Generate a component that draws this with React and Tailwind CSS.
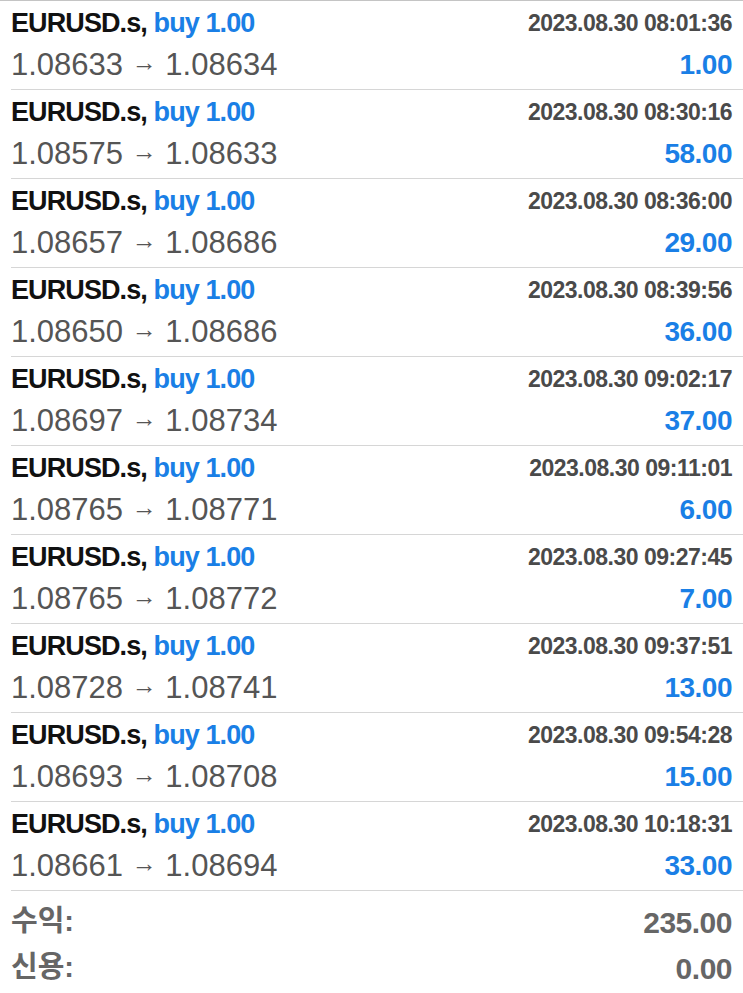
const deals = [
  { time: '2023.08.30 08:01:36', open: '1.08633', close: '1.08634', profit: '1.00' },
  { time: '2023.08.30 08:30:16', open: '1.08575', close: '1.08633', profit: '58.00' },
  { time: '2023.08.30 08:36:00', open: '1.08657', close: '1.08686', profit: '29.00' },
  { time: '2023.08.30 08:39:56', open: '1.08650', close: '1.08686', profit: '36.00' },
  { time: '2023.08.30 09:02:17', open: '1.08697', close: '1.08734', profit: '37.00' },
  { time: '2023.08.30 09:11:01', open: '1.08765', close: '1.08771', profit: '6.00' },
  { time: '2023.08.30 09:27:45', open: '1.08765', close: '1.08772', profit: '7.00' },
  { time: '2023.08.30 09:37:51', open: '1.08728', close: '1.08741', profit: '13.00' },
  { time: '2023.08.30 09:54:28', open: '1.08693', close: '1.08708', profit: '15.00' },
  { time: '2023.08.30 10:18:31', open: '1.08661', close: '1.08694', profit: '33.00' },
];

function DealRow({ deal }) {
  return (
    <div className="ml-[11px] h-[89px] border-b border-[#d6d6d6] pr-[11px] pt-[4px]">
      {/* symbol + time */}
      <div className="flex h-[36px] items-center justify-between">
        <span className="text-[27px] font-bold tracking-[-0.9px] text-[#111]">
          EURUSD.s, <span className="text-[#1a7fe6]">buy 1.00</span>
        </span>
        <span className="text-[23px] font-bold tracking-[-0.5px] text-[#4a4a4a]">{deal.time}</span>
      </div>
      {/* prices + profit */}
      <div className="flex h-[48px] items-center justify-between">
        <span className="text-[31px] text-[#555]">
          {deal.open} <span className="relative -top-[4px] text-[25px]">→</span> {deal.close}
        </span>
        <span className="text-[28px] font-bold tracking-[-0.5px] text-[#1a7fe6]">{deal.profit}</span>
      </div>
    </div>
  );
}

export default function App() {
  return (
    <div className="h-[993px] w-[743px] overflow-hidden border-t border-[#c4c4c4] bg-white font-['Liberation_Sans','Noto_Sans_CJK_KR',sans-serif]">
      {deals.map((d) => (
        <DealRow key={d.time} deal={d} />
      ))}

      {/* 합계 */}
      <div className="px-[11px] pt-[8px] text-[#666]">
        <div className="flex h-[46px] items-center justify-between">
          <span className="text-[29px] font-bold">수익:</span>
          <span className="text-[30px] font-bold tracking-[-0.5px]">235.00</span>
        </div>
        <div className="flex h-[46px] items-center justify-between">
          <span className="text-[29px] font-bold">신용:</span>
          <span className="text-[30px] font-bold tracking-[-0.5px]">0.00</span>
        </div>
      </div>
    </div>
  );
}
